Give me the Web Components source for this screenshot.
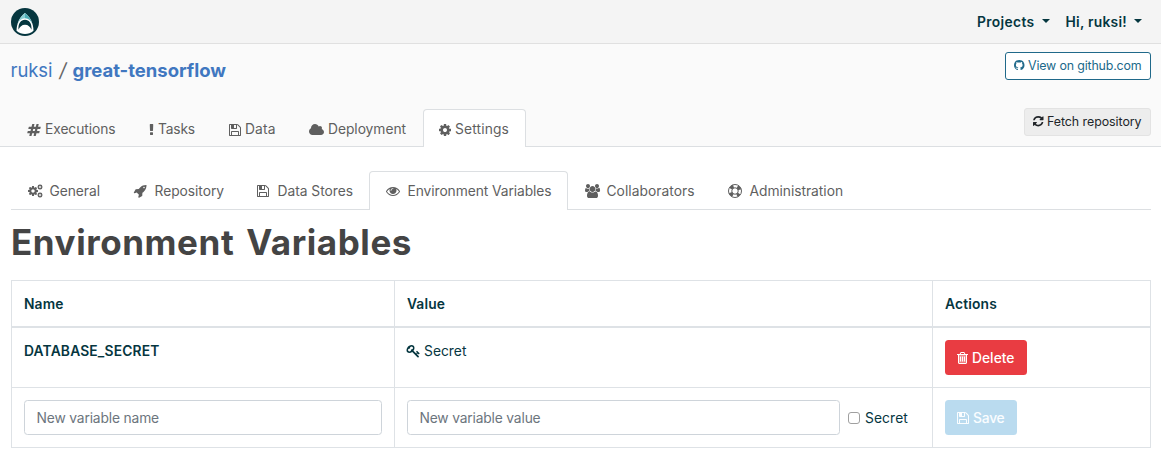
<!DOCTYPE html>
<html lang="en">
<head>
<meta charset="utf-8">
<title>Environment Variables</title>
<style>
  html, body { margin: 0; background: #fff; }
  body { font: 13.8px/21px Inter, "Liberation Sans", sans-serif; color: #05363f; }
</style>
</head>
<body>
<settings-page></settings-page>
<script>
const cog = 'M1152 896q0-106-75-181t-181-75-181 75-75 181 75 181 181 75 181-75 75-181zm512-109v222q0 12-8 23t-20 13l-185 28q-19 54-39 91 35 50 107 138 10 12 10 25t-9 23q-27 37-99 108t-94 71q-12 0-26-9l-138-108q-44 23-91 38-16 136-29 186-7 28-36 28h-222q-14 0-24.5-8.5t-11.5-21.5l-28-184q-49-16-90-37l-141 107q-10 9-25 9-14 0-25-11-126-114-165-168-7-10-7-23 0-12 8-23 15-21 51-66.5t54-70.5q-27-50-41-99l-183-27q-13-2-21-12.5t-8-23.5v-222q0-12 8-23t19-13l186-28q14-46 39-92-40-57-107-138-10-12-10-24 0-10 9-23 26-36 98.5-107.5t94.5-71.5q13 0 26 10l138 107q44-23 91-38 16-136 29-186 7-28 36-28h222q14 0 24.5 8.5t11.5 21.5l28 184q49 16 90 37l142-107q9-9 24-9 13 0 25 10 129 119 165 170 7 8 7 22 0 12-8 23-15 21-51 66.5t-54 70.5q26 50 41 98l183 28q13 2 21 12.5t8 23.5z';
const p = d => `<path d="${d}"/>`;
// name: [left edge, width, markup] on a 1792-unit em
const ICONS = {
  cog: [128, 1536, p(cog)],
  cogs: [64, 1920, `<g transform="translate(-40 152) scale(.83)">${p(cog)}</g><g transform="translate(1197 -19) scale(.45)">${p(cog)}</g><g transform="translate(1197 1005) scale(.45)">${p(cog)}</g>`],
  cloud: [64, 1920, p('M1984 1152q0 159-112.5 271.5t-271.5 112.5h-1088q-185 0-316.5-131.5t-131.5-316.5q0-132 71-241.5t187-163.5q-2-28-2-43 0-212 150-362t362-150q158 0 286.5 88t187.5 230q70-62 166-62 106 0 181 75t75 181q0 75-41 138 129 30 213 134.5t84 239.5z')],
  floppy: [128, 1536, p('M512 1536h768v-384h-768v384zm896 0h128v-896q0-14-10-38.5t-20-34.5l-281-281q-10-10-34-20t-39-10v416q0 40-28 68t-68 28h-576q-40 0-68-28t-28-68v-416h-128v1280h128v-416q0-40 28-68t68-28h832q40 0 68 28t28 68v416zm-384-928v-320q0-13-9.5-22.5t-22.5-9.5h-192q-13 0-22.5 9.5t-9.5 22.5v320q0 13 9.5 22.5t22.5 9.5h192q13 0 22.5-9.5t9.5-22.5zm640 32v928q0 40-28 68t-68 28h-1344q-40 0-68-28t-28-68v-1344q0-40 28-68t68-28h928q40 0 88 20t76 48l280 280q28 28 48 76t20 88z')],
  trash: [192, 1408, p('M704 736v576q0 14-9 23t-23 9h-64q-14 0-23-9t-9-23v-576q0-14 9-23t23-9h64q14 0 23 9t9 23zm256 0v576q0 14-9 23t-23 9h-64q-14 0-23-9t-9-23v-576q0-14 9-23t23-9h64q14 0 23 9t9 23zm256 0v576q0 14-9 23t-23 9h-64q-14 0-23-9t-9-23v-576q0-14 9-23t23-9h64q14 0 23 9t9 23zm128 724v-948h-896v948q0 22 7 40.5t14.5 27 10.5 8.5h832q3 0 10.5-8.5t14.5-27 7-40.5zm-672-1076h448l-48-117q-7-9-17-11h-317q-10 2-17 11zm928 32v64q0 14-9 23t-23 9h-96v948q0 83-47 143.5t-113 60.5h-832q-66 0-113-58.5t-47-141.5v-952h-96q-14 0-23-9t-9-23v-64q0-14 9-23t23-9h309l70-167q15-37 54-63t79-26h320q40 0 79 26t54 63l70 167h309q14 0 23 9t9 23z') + '<path fill-opacity=".4" d="M448 512h896v1000h-896z"/>'],
  refresh: [128, 1536, p('M1639 1056q0 5-1 7-64 268-268 434.5t-478 166.5q-146 0-282.5-55t-243.5-157l-129 129q-19 19-45 19t-45-19-19-45v-448q0-26 19-45t45-19h448q26 0 45 19t19 45-19 45l-137 137q71 66 161 102t187 36q134 0 250-65t186-179q11-17 53-117 8-23 30-23h192q13 0 22.5 9.5t9.5 22.5zm25-800v448q0 26-19 45t-45 19h-448q-26 0-45-19t-19-45 19-45l138-138q-148-137-349-137-134 0-250 65t-186 179q-11 17-53 117-8 23-30 23h-199q-13 0-22.5-9.5t-9.5-22.5v-7q65-268 270-434.5t480-166.5q146 0 284 55.5t245 156.5l130-129q19-19 45-19t45 19 19 45z')],
  github: [128, 1536, p('M896 128q209 0 385.5 103t279.5 279.5 103 385.5q0 251-146.5 451.5t-378.5 277.5q-27 5-40-7t-13-30q0-3 .5-76.5t.5-134.5q0-97-52-142 57-6 102.5-18t94-39 81-66.5 53-105 20.5-150.5q0-119-79-206 37-91-8-204-28-9-81 11t-92 44l-38 24q-93-26-192-26t-192 26q-16-11-42.5-27t-83.5-38.5-85-13.5q-45 113-8 204-79 87-79 206 0 85 20.5 150t52.5 105 80.5 67 94 39 102.5 18q-39 36-49 103-21 10-45 15t-57 5-65.5-21.5-55.5-62.5q-19-32-48.5-52t-49.5-24l-20-3q-21 0-29 4.5t-5 11.5 9 14 13 12l7 5q22 10 43.5 38t31.5 51l10 23q13 38 44 61.5t67 30 69.5 7 55.5-3.5l23-4q0 38 .5 88.5t.5 54.5q0 18-13 30t-40 7q-232-77-378.5-277.5t-146.5-451.5q0-209 103-385.5t279.5-279.5 385.5-103z')],
  hashtag: [0, 1792, p('M991 1024l64-256h-254l-64 256h254zm768-504l-56 224q-7 24-31 24h-327l-64 256h311q15 0 25 12 10 14 6 28l-56 224q-5 24-31 24h-327l-81 328q-7 24-31 24h-224q-16 0-26-12-9-12-6-28l78-312h-254l-81 328q-7 24-31 24h-225q-15 0-25-12-9-12-6-28l78-312h-311q-15 0-25-12-9-12-6-28l56-224q7-24 31-24h327l64-256h-311q-15 0-25-12-10-14-6-28l56-224q5-24 31-24h327l81-328q7-24 32-24h224q15 0 25 12 9 12 6 28l-78 312h254l81-328q7-24 32-24h224q15 0 25 12 9 12 6 28l-78 312h311q15 0 25 12 9 12 6 28z')],
  exclamation: [576, 640, p('M1088 1248v224q0 26-19 45t-45 19h-256q-26 0-45-19t-19-45v-224q0-26 19-45t45-19h256q26 0 45 19t19 45zm30-1056l-28 768q-1 26-20.5 45t-45.5 19h-256q-26 0-45.5-19t-20.5-45l-28-768q-1-26 17.5-45t44.5-19h320q26 0 44.5 19t17.5 45z')],
  eye: [0, 1792, p('M1664 960q-152-236-381-353 61 104 61 225 0 185-131.5 316.5t-316.5 131.5-316.5-131.5-131.5-316.5q0-121 61-225-229 117-381 353 133 205 333.5 326.5t434.5 121.5 434.5-121.5 333.5-326.5zm-720-384q0-20-14-34t-34-14q-125 0-214.5 89.5t-89.5 214.5q0 20 14 34t34 14 34-14 14-34q0-86 61-147t147-61q20 0 34-14t14-34zm848 384q0 34-20 69-140 230-376.5 368.5t-499.5 138.5-499.5-139-376.5-368q-20-35-20-69t20-69q140-229 376.5-368t499.5-139 499.5 139 376.5 368q20 35 20 69z')],
  users: [64, 1920, p('M657 896q-162 5-265 128h-134q-82 0-138-40.5t-56-118.5q0-353 124-353 6 0 43.5 21t97.5 42.5 119 21.5q67 0 133-23-5 37-5 66 0 159 93 293zm1071 637q0 120-73 189.5t-194 69.5h-874q-121 0-194-69.5t-73-189.5q0-53 3.5-103.5t14-109 26.5-108.5 43-97.5 62-81 85.5-53.5 111.5-20q10 0 43 21.5t73 48 107 48 135 21.5 135-21.5 107-48 73-48 43-21.5q61 0 111.5 20t85.5 53.5 62 81 43 97.5 26.5 108.5 14 109 3.5 103.5zm-1024-1277q0 106-75 181t-181 75-181-75-75-181 75-181 181-75 181 75 75 181zm704 384q0 159-112.5 271.5t-271.5 112.5-271.5-112.5-112.5-271.5 112.5-271.5 271.5-112.5 271.5 112.5 112.5 271.5zm576 225q0 78-56 118.5t-138 40.5h-134q-103-123-265-128 93-134 93-293 0-29-5-66 66 23 133 23 59 0 119-21.5t97.5-42.5 43.5-21q124 0 124 353zm-128-609q0 106-75 181t-181 75-181-75-75-181 75-181 181-75 181 75 75 181z')],
  rocket: [64, 1664, p('M1440 448q0-40-28-68t-68-28-68 28-28 68 28 68 68 28 68-28 28-68zm224-288q0 249-75.5 430.5t-253.5 360.5q-81 80-195 176l-20 379q-2 16-16 26l-384 224q-7 4-16 4-12 0-23-9l-64-64q-13-14-8-32l85-276-281-281-276 85q-3 1-9 1-14 0-23-9l-64-64q-17-19-5-39l224-384q10-14 26-16l379-20q96-114 176-195 188-187 358-258t431-71q14 0 24 9.5t10 22.5z')],
  key: [64, 1664, p('M832 512q0-80-56-136t-136-56-136 56-56 136q0 42 19 83-41-19-83-19-80 0-136 56t-56 136 56 136 136 56 136-56 56-136q0-42-19-83 41 19 83 19 80 0 136-56t56-136zm851 704q0 17-49 66t-66 49q-9 0-28.5-16t-36.5-33-38.5-40-24.5-26l-96 96 220 220q28 28 28 68 0 42-39 81t-81 39q-40 0-68-28l-671-671q-176 131-365 131-163 0-265.5-102.5t-102.5-265.5q0-160 95-313t248-248 313-95q163 0 265.5 102.5t102.5 265.5q0 189-131 365l355 355 96-96q-3-3-26-24.5t-40-38.5-33-36.5-16-28.5q0-17 49-66t66-49q13 0 23 10 6 6 46 44.5t82 79.5 86.5 86 73 78 28.5 41z')],
  ring: [0, 1792, '<g fill="none" stroke="currentColor"><circle cx="896" cy="896" r="832" stroke-width="128"/><circle cx="896" cy="896" r="416" stroke-width="128"/><circle cx="896" cy="896" r="610" stroke-width="440" stroke-dasharray="479 479" stroke-dashoffset="240" transform="rotate(45 896 896)"/></g>']
};

class UiElement extends HTMLElement {
  constructor() { super(); this.attachShadow({ mode: 'open' }); }
  render(css, html) { this.shadowRoot.innerHTML = `<style>${css}</style>${html}`; }
}

customElements.define('fa-icon', class extends UiElement {
  connectedCallback() {
    const [x, w, art] = ICONS[this.getAttribute('name')];
    this.render(`:host{display:inline-flex;flex:none;justify-content:center}
      svg{display:block;height:var(--icon,14px);width:calc(var(--icon,14px)*${w / 1792});fill:currentColor;overflow:visible}`,
      `<svg viewBox="${x} 0 ${w} 1792">${art}</svg>`);
  }
});

// A single line of text tracked so that it fills the width given in "w".
customElements.define('fit-text', class extends UiElement {
  connectedCallback() {
    this.render(':host{display:inline-block;white-space:nowrap;flex:none}', '<span><slot></slot></span>');
    const w = parseFloat(this.getAttribute('w'));
    const natural = this.getBoundingClientRect().width;
    this.style.letterSpacing = (w - natural) / this.textContent.length + 'px';
    this.style.width = w + 'px';
  }
});

customElements.define('nav-menu', class extends UiElement {
  connectedCallback() {
    this.render(`:host{display:flex;align-items:center;font-weight:600;color:#05363f}
      span{padding-top:1px}
      i{border:4px solid transparent;border-top-color:currentColor;border-bottom:0;margin:-1px 0 0 7px}`,
      '<span><slot></slot></span><i></i>');
  }
});

customElements.define('brand-logo', class extends UiElement {
  connectedCallback() {
    this.render(':host{display:block}svg{display:block}',
      `<svg width="28" height="28" viewBox="0 0 28 28"><circle cx="14" cy="14" r="14" fill="#05363f"/>
      <path d="M14 5C9.300 8.500 5.500 15 5.500 22.800C8 25 11 25.900 14 25.900S20 25 22.500 22.800C22.500 15 18.700 8.500 14 5Z" fill="#fff"/>
      <path d="M14 5C10.500 7.500 7.600 11.500 6.200 17Q8.500 10.300 14 10.200Z" fill="#86cdd3"/>
      <path d="M14 5C17.500 7.500 20.400 11.500 21.800 17Q19.500 10.300 14 10.200Z" fill="#4dadb6"/>
      <path d="M7.500 21.800C7 15.500 9.800 11.800 14 11.800S21 15.500 20.500 21.800C19.300 18.800 17.200 16.800 14 16.800S8.700 18.800 7.500 21.800Z" fill="#05363f"/></svg>`);
  }
});

customElements.define('ui-button', class extends UiElement {
  connectedCallback() {
    this.render(`:host{display:inline-flex;box-sizing:border-box;align-items:center;gap:4px;height:35px;padding:1px 11px 0;border:1px solid transparent;border-radius:3.500px;color:#fff;white-space:nowrap;font-weight:500}
      :host([kind=danger]){background:#e93c42;width:82px}
      :host([kind=save]){background:#badbef;color:#fafdff;width:72px}
      :host([small]){height:28px;padding:0 8.500px 0 8px;gap:4px;font-size:12.400px;font-weight:400;--icon:12.250px;border-radius:3px}
      :host([kind=outline]){border-color:#20698a;color:#20698a;background:#fff;padding-bottom:1px}
      :host([kind=light]){border-color:#e3e3e3;background:#ededed;color:#212529;padding-bottom:1px}`, '<slot></slot>');
  }
});

customElements.define('tab-item', class extends UiElement {
  connectedCallback() {
    this.render(`:host{display:flex;box-sizing:border-box;align-items:center;gap:4px;height:var(--tab,38px);width:var(--w);padding:var(--drop,1px) 0 0 15px;border:1px solid transparent;border-bottom:0;border-radius:4px 4px 0 0;color:#5f5f5f}
      :host([fw]){padding-left:14px;gap:5.500px}
      :host([fw]) fa-icon{width:18px}
      :host([active]){background:#fff;border-color:#dcdfe2;height:calc(var(--tab,38px) + 1px);margin-bottom:-1px;padding-bottom:1px;position:relative}`,
      `<fa-icon name="${this.getAttribute('icon')}"></fa-icon><slot></slot>`);
    this.style.setProperty('--w', this.getAttribute('width') + 'px');
  }
});

customElements.define('tab-bar', class extends UiElement {
  connectedCallback() {
    this.render(':host{display:flex;align-items:flex-end;border-bottom:1px solid #dcdfe2}', '<slot></slot>');
  }
});

customElements.define('text-field', class extends UiElement {
  connectedCallback() {
    this.render(`:host{display:flex;box-sizing:border-box;height:35px;align-items:center;padding:2px 11.500px 0;border:1px solid #ced4da;border-radius:3.500px;color:#6c757d;background:#fff}`, '<slot></slot>');
  }
});

customElements.define('check-box', class extends UiElement {
  connectedCallback() {
    this.render(`:host{display:flex;align-items:center;gap:5px}
      i{box-sizing:border-box;width:12px;height:12px;border:1px solid #a0a0a0;border-radius:3px;background:#fff}
      span{padding-top:2px}`, '<i></i><span><slot></slot></span>');
  }
});

customElements.define('variable-table', class extends UiElement {
  connectedCallback() {
    this.render(`:host{display:grid;box-sizing:border-box;width:1140px;grid-template:46px 61px 60px / 383px 538px 218px;border:solid #dee2e6;border-width:1px 0 0 1px;height:168px}
      .c{box-sizing:border-box;border:solid #dee2e6;border-width:0 1px 1px 0;padding:12px;min-width:0}
      .h{font-weight:600;height:47px;border-bottom-width:2px;padding-top:13px}
      .n{font-weight:600}.c.n,.c.v{padding-top:14px}.r{padding-top:13px}
      .v{display:flex;align-items:flex-start;gap:4px}.v fa-icon{margin-top:3px}
      .f{display:flex;gap:8px;align-items:center}.f text-field{width:433px}`,
      `<div class="c h"><fit-text w="39.500">Name</fit-text></div>
       <div class="c h"><fit-text w="38">Value</fit-text></div>
       <div class="c h"><fit-text w="52">Actions</fit-text></div>
       <div class="c r n"><fit-text w="135.500">DATABASE_SECRET</fit-text></div>
       <div class="c r v"><fa-icon name="key"></fa-icon><fit-text w="42.500">Secret</fit-text></div>
       <div class="c r"><ui-button kind="danger"><fa-icon name="trash"></fa-icon><fit-text w="42.500">Delete</fit-text></ui-button></div>
       <div class="c"><text-field><fit-text w="122.500">New variable name</fit-text></text-field></div>
       <div class="c f"><text-field><fit-text w="121">New variable value</fit-text></text-field><check-box><fit-text w="43">Secret</fit-text></check-box></div>
       <div class="c"><ui-button kind="save"><fa-icon name="floppy"></fa-icon><fit-text w="31.500">Save</fit-text></ui-button></div>`);
  }
});

customElements.define('settings-page', class extends UiElement {
  connectedCallback() {
    this.render(`:host{display:block;height:459px;overflow:hidden}
      nav{display:flex;box-sizing:border-box;height:44px;padding:0 19px 0 11px;align-items:center;background:#f4f4f4;border-bottom:1px solid #e0e0e0}
      nav nav-menu:first-of-type{margin-left:auto;margin-right:16px}
      header{background:#fafafa;height:103px;box-sizing:border-box;display:flex;flex-direction:column}
      .top{display:flex;justify-content:space-between;padding:8px 10px 0 10.500px;height:57px;box-sizing:border-box;align-items:flex-start}
      .crumb{display:flex;align-items:baseline;font-size:18.500px;line-height:27px;margin-top:5px;color:#666}
      .crumb b{color:#4077c0;font-weight:700}.crumb .u{color:#4077c0}
      .crumb .s{width:20px;text-align:center;font-size:19.500px;transform:skewX(-9deg)}
      .bar{display:grid;flex:1}
      .bar>*{grid-area:1/1}
      .bar tab-bar{padding-left:11px;--tab:37px;--drop:3px}
      .bar ui-button{justify-self:end;margin:7px 10px 0 0;z-index:1}
      main{padding:24px 10px 0 11px}
      h1{margin:14px 0 20px;font-size:35px;line-height:36px;font-weight:700;color:#444;word-spacing:3px}`,
      `<nav><brand-logo></brand-logo>
        <nav-menu><fit-text w="57.500">Projects</fit-text></nav-menu>
        <nav-menu><fit-text w="61.500">Hi, ruksi!</fit-text></nav-menu></nav>
      <header>
        <div class="top">
          <div class="crumb"><fit-text class="u" w="42">ruksi</fit-text><span class="s">/</span><b><fit-text w="153.500">great-tensorflow</fit-text></b></div>
          <ui-button small kind="outline"><fa-icon name="github"></fa-icon><fit-text w="113.500">View on github.com</fit-text></ui-button>
        </div>
        <div class="bar">
          <tab-bar>
            <tab-item icon="hashtag" width="122"><fit-text w="70.500">Executions</fit-text></tab-item>
            <tab-item icon="exclamation" width="80"><fit-text w="37">Tasks</fit-text></tab-item>
            <tab-item icon="floppy" width="80"><fit-text w="30.500">Data</fit-text></tab-item>
            <tab-item icon="cloud" width="130"><fit-text w="78">Deployment</fit-text></tab-item>
            <tab-item icon="cog" width="103" active><fit-text w="54">Settings</fit-text></tab-item>
          </tab-bar>
          <ui-button small kind="light"><fa-icon name="refresh"></fa-icon><fit-text w="94.500">Fetch repository</fit-text></ui-button>
        </div>
      </header>
      <main>
        <tab-bar>
          <tab-item fw icon="cogs" width="105"><fit-text w="50.500">General</fit-text></tab-item>
          <tab-item fw icon="rocket" width="123"><fit-text w="69.500">Repository</fit-text></tab-item>
          <tab-item fw icon="floppy" width="130"><fit-text w="75.500">Data Stores</fit-text></tab-item>
          <tab-item fw icon="eye" width="199" active><fit-text w="144">Environment Variables</fit-text></tab-item>
          <tab-item fw icon="users" width="143"><fit-text w="88">Collaborators</fit-text></tab-item>
          <tab-item fw icon="ring" width="149"><fit-text w="93.500">Administration</fit-text></tab-item>
        </tab-bar>
        <h1><fit-text w="401">Environment Variables</fit-text></h1>
        <variable-table></variable-table>
      </main>`);
  }
});
</script>
</body>
</html>
